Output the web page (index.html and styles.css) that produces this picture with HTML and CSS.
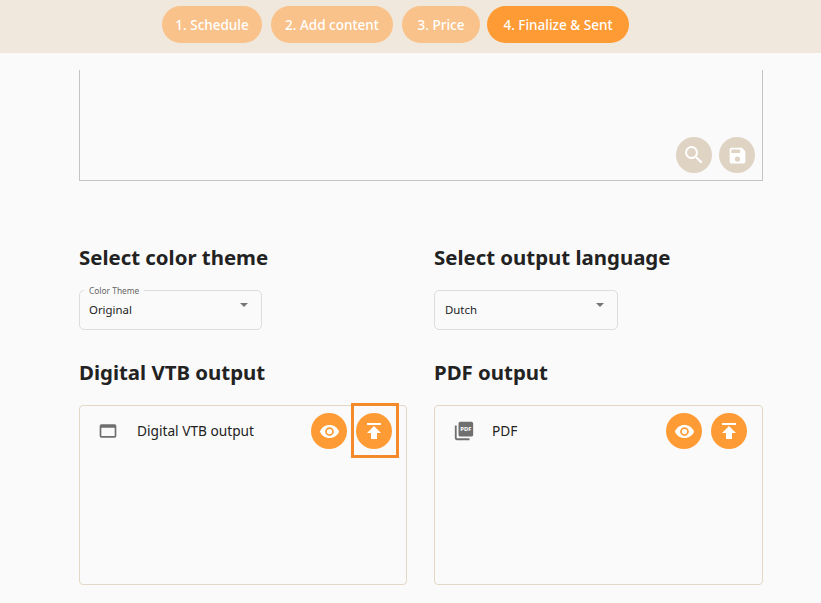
FILE: index.html
```html
<!DOCTYPE html>
<html>
  <head>
    <title>Finalize &amp; Sent</title>
    <link rel="stylesheet" href="styles.css">
  </head>
  <body>
    <nav class="steps">
      <a class="step step-1">1. Schedule</a>
      <a class="step step-2">2. Add content</a>
      <a class="step step-3">3. Price</a>
      <a class="step step-4 active">4. Finalize &amp; Sent</a>
    </nav>

    <main class="content">
      <div class="preview">
        <button class="round muted">
          <svg viewBox="0 0 24 24"><path d="M15.5 14h-.79l-.28-.27A6.47 6.47 0 0 0 16 9.5 6.5 6.5 0 1 0 9.5 16c1.61 0 3.09-.59 4.23-1.57l.27.28v.79l5 4.99L20.49 19l-4.99-5zm-6 0C7.01 14 5 11.99 5 9.5S7.01 5 9.5 5 14 7.01 14 9.5 11.99 14 9.5 14z"/></svg>
        </button>
        <button class="round muted">
          <svg class="small" viewBox="0 0 24 24"><path d="M17 3H5a2 2 0 0 0-2 2v14a2 2 0 0 0 2 2h14a2 2 0 0 0 2-2V7l-4-4zm-5 16a3 3 0 1 1 0-6 3 3 0 0 1 0 6zm3-10H5V5h10v4z"/></svg>
        </button>
      </div>

      <div class="columns">
        <section class="column">
          <h2>Select color theme</h2>
          <div class="select">
            <span class="select-label">Color Theme</span>
            <span class="select-value">Original</span>
            <span class="caret"></span>
          </div>
          <h2 class="output-title">Digital VTB output</h2>
          <div class="output">
            <svg class="output-icon window-icon" viewBox="0 0 24 24"><path d="M20 4H4a2 2 0 0 0-2 2v12a2 2 0 0 0 2 2h16a2 2 0 0 0 2-2V6a2 2 0 0 0-2-2zm0 14H4V8h16v10z"/></svg>
            <span class="output-name">Digital VTB output</span>
            <button class="round">
              <svg class="small" viewBox="0 0 24 24"><path d="M12 4.5C7 4.5 2.73 7.61 1 12c1.73 4.39 6 7.5 11 7.5s9.27-3.11 11-7.5c-1.73-4.39-6-7.5-11-7.5zM12 17a5 5 0 1 1 0-10 5 5 0 0 1 0 10zm0-8a3 3 0 1 0 0 6 3 3 0 0 0 0-6z"/></svg>
            </button>
            <button class="round marked">
              <svg viewBox="0 0 24 24"><path d="M5 4v2h14V4H5zm0 10h4v6h6v-6h4l-7-7-7 7z"/></svg>
            </button>
          </div>
        </section>

        <section class="column">
          <h2>Select output language</h2>
          <div class="select">
            <span class="select-value">Dutch</span>
            <span class="caret"></span>
          </div>
          <h2 class="output-title">PDF output</h2>
          <div class="output">
            <svg class="output-icon pdf-icon" viewBox="0 0 24 24"><path d="M20 2H8a2 2 0 0 0-2 2v12a2 2 0 0 0 2 2h12a2 2 0 0 0 2-2V4a2 2 0 0 0-2-2zM4 6H2v14a2 2 0 0 0 2 2h14v-2H4V6z"/><text x="14" y="12.5" class="pdf-mark">PDF</text></svg>
            <span class="output-name">PDF</span>
            <button class="round">
              <svg class="small" viewBox="0 0 24 24"><path d="M12 4.5C7 4.5 2.73 7.61 1 12c1.73 4.39 6 7.5 11 7.5s9.27-3.11 11-7.5c-1.73-4.39-6-7.5-11-7.5zM12 17a5 5 0 1 1 0-10 5 5 0 0 1 0 10zm0-8a3 3 0 1 0 0 6 3 3 0 0 0 0-6z"/></svg>
            </button>
            <button class="round">
              <svg viewBox="0 0 24 24"><path d="M5 4v2h14V4H5zm0 10h4v6h6v-6h4l-7-7-7 7z"/></svg>
            </button>
          </div>
        </section>
      </div>
    </main>
  </body>
</html>
```

FILE: styles.css
```css
html, body { margin: 0; height: 603px; overflow: hidden; }
body { background: #fafafa; color: #222; font-family: "Noto Sans", sans-serif; }

/* Step bar */
.steps {
  height: 53px;
  box-sizing: border-box;
  padding: 6px 0 0 162px;
  background: #f0e8dc;
  display: flex;
  align-items: flex-start;
}
.step {
  height: 37px;
  border-radius: 19px;
  background: #f9c28a;
  color: #fff;
  font-size: 13.5px;
  font-weight: 500;
  line-height: 38px;
  text-align: center;
}
.step-1 { width: 100px; margin-right: 9px; }
.step-2 { width: 122px; margin-right: 9px; }
.step-3 { width: 78px; margin-right: 7px; }
.step-4 { width: 142px; }
.step.active { background: #ff9b35; }

.content { padding: 17px 58px 0 79px; }

/* Preview box */
.preview {
  height: 111px;
  box-sizing: border-box;
  border: 1px solid #c4c4c4;
  border-top: 0;
  padding: 0 7px 7px 0;
  display: flex;
  justify-content: flex-end;
  align-items: flex-end;
  gap: 7px;
}

.round {
  width: 36px;
  height: 36px;
  padding: 6px;
  border: 0;
  border-radius: 50%;
  background: #ff9b35;
  flex: none;
  position: relative;
}
.round svg { display: block; width: 24px; height: 24px; fill: #fff; }
.round svg.small { width: 21px; height: 21px; margin: 1.5px; }
.round.muted { background: #dfd3c3; }
.round.marked::after {
  content: "";
  position: absolute;
  left: -5px;
  top: -10px;
  width: 42px;
  height: 49px;
  border: 3px solid #f58a2c;
}

.columns {
  display: grid;
  grid-template-columns: 328px 329px;
  gap: 27px;
  margin-top: 62px;
}

h2 {
  margin: 0;
  font-size: 20.4px;
  line-height: 28px;
  font-weight: 700;
  color: #222;
}
.output-title { margin-top: 28px; }

/* Dropdowns */
.select {
  width: 183px;
  height: 40px;
  box-sizing: border-box;
  margin-top: 19px;
  border: 1px solid #ddd;
  border-radius: 5px;
  padding: 0 9px 2px 9px;
  display: flex;
  align-items: center;
  justify-content: space-between;
  position: relative;
  font-size: 11.4px;
}
.column + .column .select { width: 184px; padding-left: 10px; }
.select-label {
  position: absolute;
  left: 4px;
  top: -6px;
  padding: 0 5px;
  background: #fafafa;
  color: #666;
  font-size: 8.4px;
  line-height: 11px;
}
.caret {
  margin: 0 4px 8px 0;
  border-left: 4px solid transparent;
  border-right: 4px solid transparent;
  border-top: 4px solid #757575;
}

/* Output cards */
.output {
  height: 180px;
  box-sizing: border-box;
  margin-top: 19px;
  border: 1px solid #e3d7c8;
  border-radius: 4px;
  padding: 7px 14px 0 18px;
  display: flex;
  align-items: flex-start;
  gap: 9px;
}
.column + .column .output { padding-right: 15px; }
.output-icon { margin: 7px 10px 0 0; fill: #6f6f6f; flex: none; }
.window-icon { width: 20px; height: 20px; margin-top: 8px; }
.pdf-icon { width: 22px; height: 22px; margin-right: 8px; }
.output-name { flex: 1; font-size: 13.7px; line-height: 36px; }
.pdf-mark { font: 700 6.4px "Noto Sans", sans-serif; fill: #fff; text-anchor: middle; }
```
